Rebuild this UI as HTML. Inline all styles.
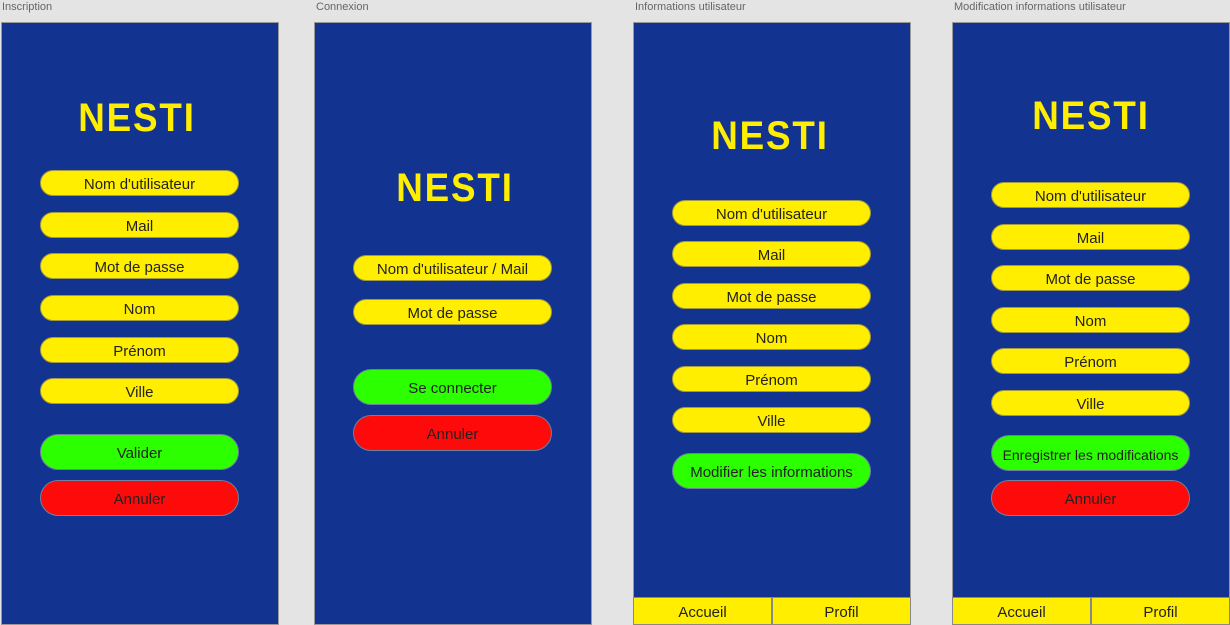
<!DOCTYPE html>
<html><head><meta charset="utf-8"><style>
*{margin:0;padding:0;box-sizing:border-box}
body{width:1230px;height:625px;background:#e4e4e4;position:relative;overflow:hidden;font-family:"Liberation Sans",sans-serif}
.lbl{position:absolute;top:1px;font-size:11px;color:#666}
.p{position:absolute;top:22px;width:278px;height:603px;background:#12338f;border:1px solid #999}
.logo{position:absolute;width:200px;text-align:center;font-weight:bold;font-size:40px;color:#ffee00;line-height:40px;letter-spacing:2px;transform:scale(0.92,1)}
.f,.b,.nav{display:flex;align-items:center;justify-content:center;padding-top:3px}
.f{position:absolute;width:199px;height:26px;border-radius:13px;background:#ffee00;border:1px solid #a09a40;font-size:15px;color:#222}
.b{position:absolute;width:199px;height:36px;border-radius:18px;font-size:15px;color:#222;border:1px solid #7080a0}
.g{background:#2cff00}.r{background:#ff0a0a}
.nav{position:absolute;top:597px;height:28px;background:#ffee00;border:1px solid #888;font-size:15px;color:#222}
</style></head><body>
<div class="lbl" style="left:2px">Inscription</div>
<div class="lbl" style="left:316px">Connexion</div>
<div class="lbl" style="left:635px">Informations utilisateur</div>
<div class="lbl" style="left:954px">Modification informations utilisateur</div>

<div class="p" style="left:1px"></div>
<div class="p" style="left:314px"></div>
<div class="p" style="left:633px"></div>
<div class="p" style="left:952px"></div>

<div class="logo" style="left:37px;top:98px">NESTI</div>
<div class="f" style="left:40px;top:170px">Nom d'utilisateur</div>
<div class="f" style="left:40px;top:212px">Mail</div>
<div class="f" style="left:40px;top:253px">Mot de passe</div>
<div class="f" style="left:40px;top:295px">Nom</div>
<div class="f" style="left:40px;top:337px">Prénom</div>
<div class="f" style="left:40px;top:378px">Ville</div>
<div class="b g" style="left:40px;top:434px">Valider</div>
<div class="b r" style="left:40px;top:480px">Annuler</div>

<div class="logo" style="left:355px;top:168px">NESTI</div>
<div class="f" style="left:353px;top:255px">Nom d'utilisateur / Mail</div>
<div class="f" style="left:353px;top:299px">Mot de passe</div>
<div class="b g" style="left:353px;top:369px">Se connecter</div>
<div class="b r" style="left:353px;top:415px">Annuler</div>

<div class="logo" style="left:670px;top:116px">NESTI</div>
<div class="f" style="left:672px;top:200px">Nom d'utilisateur</div>
<div class="f" style="left:672px;top:241px">Mail</div>
<div class="f" style="left:672px;top:283px">Mot de passe</div>
<div class="f" style="left:672px;top:324px">Nom</div>
<div class="f" style="left:672px;top:366px">Prénom</div>
<div class="f" style="left:672px;top:407px">Ville</div>
<div class="b g" style="left:672px;top:453px">Modifier les informations</div>
<div class="nav" style="left:633px;width:139px">Accueil</div>
<div class="nav" style="left:772px;width:139px">Profil</div>

<div class="logo" style="left:991px;top:96px">NESTI</div>
<div class="f" style="left:991px;top:182px">Nom d'utilisateur</div>
<div class="f" style="left:991px;top:224px">Mail</div>
<div class="f" style="left:991px;top:265px">Mot de passe</div>
<div class="f" style="left:991px;top:307px">Nom</div>
<div class="f" style="left:991px;top:348px">Prénom</div>
<div class="f" style="left:991px;top:390px">Ville</div>
<div class="b g" style="left:991px;top:435px;font-size:14px">Enregistrer les modifications</div>
<div class="b r" style="left:991px;top:480px">Annuler</div>
<div class="nav" style="left:952px;width:139px">Accueil</div>
<div class="nav" style="left:1091px;width:139px">Profil</div>
</body></html>
